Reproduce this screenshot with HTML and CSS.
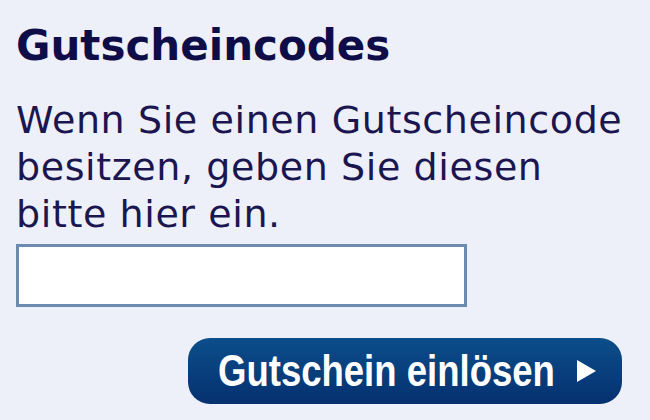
FILE: index.html
```html
<!DOCTYPE html>
<html lang="de">
<head>
    <meta charset="UTF-8">
    <title>Gutscheincodes</title>
    <link rel="stylesheet" href="styles.css">
</head>
<body>
    <div class="voucher">
        <h2>Gutscheincodes</h2>
        <p>Wenn Sie einen Gutscheincode besitzen, geben Sie diesen bitte hier ein.</p>
        <form class="voucher-form">
            <input type="text" name="code">
            <div class="actions">
                <button type="submit"><span class="label">Gutschein einlösen</span><span class="arrow"></span></button>
            </div>
        </form>
    </div>
</body>
</html>
```

FILE: styles.css
```css
html, body {
    margin: 0;
    padding: 0;
    background-color: #eef0f9;
}
.voucher {
    width: 606px;
    padding: 21px 0 0 16px;
    font-family: "DejaVu Sans", Verdana, sans-serif;
    color: #1b1650;
}
.voucher h2 {
    margin: 0;
    font-size: 42px;
    line-height: 50px;
    color: #0f0d48;
}
.voucher p {
    margin: 26px 0 0 0;
    width: 620px;
    font-size: 38px;
    letter-spacing: 0.6px;
    line-height: 47px;
}
.voucher-form input {
    display: block;
    box-sizing: border-box;
    width: 451px;
    height: 63px;
    margin: 6px 0 0 0;
    border: 3px solid #6b8bb0;
    background: #fff;
    padding: 0 10px;
    font-size: 30px;
}
.actions {
    display: flex;
    justify-content: flex-end;
    margin-top: 31px;
}
.actions button {
    display: flex;
    align-items: center;
    width: 434px;
    height: 66px;
    padding: 0 0 0 30px;
    border: none;
    border-radius: 22px;
    background: linear-gradient(#0b4e8a, #063070);
    color: #fff;
    font-family: "Liberation Sans", Arial, sans-serif;
    font-weight: bold;
    font-size: 44px;
    cursor: pointer;
}
.label {
    display: inline-block;
    transform: scaleX(0.83);
    transform-origin: left center;
    margin-right: -47px;
    white-space: nowrap;
}
.arrow {
    width: 0;
    height: 0;
    border-top: 11px solid transparent;
    border-bottom: 11px solid transparent;
    border-left: 19px solid #fff;
}
```
